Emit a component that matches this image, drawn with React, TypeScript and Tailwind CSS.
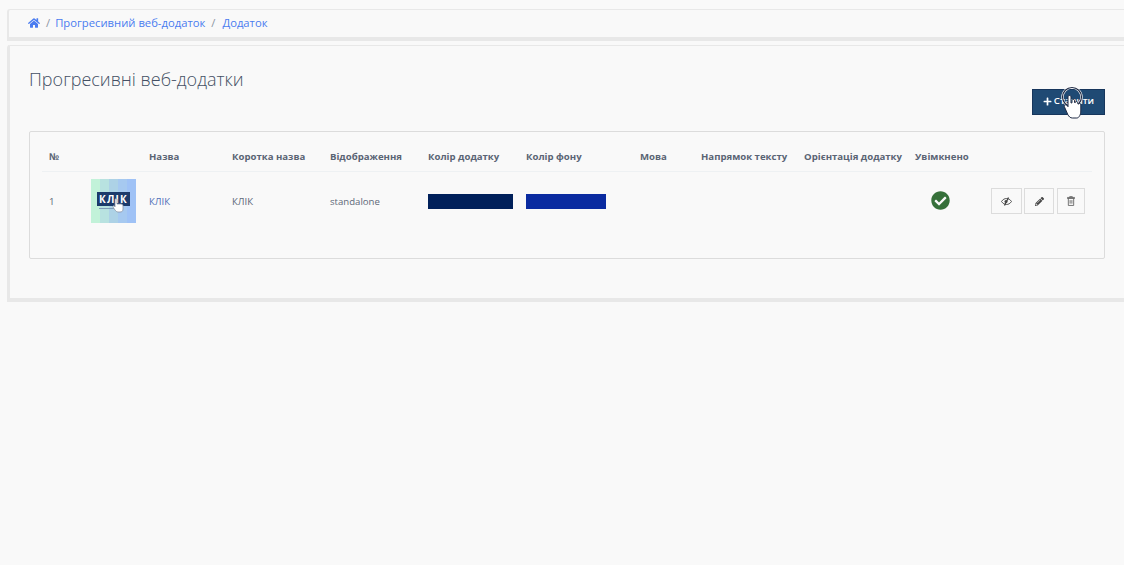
import { FaHome, FaPlus, FaCheckCircle, FaPencilAlt } from "react-icons/fa";

const heads = ["№", "", "Назва", "Коротка назва", "Відображення", "Колір додатку", "Колір фону", "Мова", "Напрямок тексту", "Орієнтація додатку", "Увімкнено", ""];
const cols = "grid grid-cols-[49px_58px_83px_98px_98px_98px_114px_61px_103px_111px_76px_1fr]";
const stripes = ["bg-[#c2f2d9]", "bg-[#b8e2e0]", "bg-[#add2e6]", "bg-[#a6c9f0]", "bg-[#9fc2f6]"];

function Logo() {
  return (
    <div className="relative flex h-[44px] w-[45px]">
      {stripes.map((s) => (
        <div key={s} className={`h-full flex-1 ${s}`} />
      ))}
      <div className="absolute left-[6px] top-[13px] flex h-[14px] w-[33px] items-center justify-center bg-[#1c3a6b] text-[10px] font-bold leading-none tracking-[1.2px] text-white">
        КЛІК
      </div>
      <div className="absolute left-[8px] top-[29px] h-[1px] w-[15px] bg-[#7f9bb8]" />
      <svg className="absolute left-[21px] top-[19px]" width="12" height="15" viewBox="0 0 12 15">
        <path d="M3 1.500c0-1 2-1 2 0V6h4c1.500 0 2 1 2 2v3c0 2-1 3-3 3H6c-1.500 0-2-1-3-2L1 9c-.5-1 .8-1.500 1.500-.8L3 9z" fill="#fff" stroke="#8a93a5" strokeWidth="0.8" />
      </svg>
    </div>
  );
}

function Cursor() {
  return (
    <svg className="pointer-events-none absolute left-[1061px] top-[85px]" width="24" height="35" viewBox="0 0 24 35">
      <circle cx="11" cy="12" r="9.500" fill="none" stroke="#fff" strokeWidth="2.400" />
      <circle cx="11" cy="12" r="9.500" fill="none" stroke="#1f2a44" strokeWidth="1.200" />
      <path d="M7 12c0-2 3-2 3 0v6l1-.2V15.500c0-1.500 2.500-1.500 2.500 0v2l.8.100c.2-1.500 2.500-1.300 2.500.2v1l.7.200c.5-1 2.300-.7 2.300.8v6.200c0 3-1.500 7-4 7h-4.500c-2 0-3.500-1.500-4.500-3.500L3.500 22c-.8-1.800 1-3 2.500-1.500l1 1.200z" fill="#fff" stroke="#1f2a44" strokeWidth="1" />
    </svg>
  );
}

function ActionBtn({ w, children }: { w: string; children: React.ReactNode }) {
  return <div className={`flex h-[26px] items-center justify-center border border-[#dcdcdc] text-[#444] ${w}`}>{children}</div>;
}

export default function App() {
  return (
    <div className="relative min-h-[565px] bg-[#f9f9f9] pl-[7px] pt-[9px] font-['Open_Sans',sans-serif] text-[#5d6878]">
      <nav className="flex h-[32px] items-center gap-[6px] rounded-tl-[3px] border-b-[4px] border-l-[2px] border-t border-[#e8e8e8] pb-[1px] pl-[19px] text-[11.25px] text-[#4a7cf0]">
        <FaHome className="text-[12px]" />
        <span className="text-[#8c95a3]">/</span>
        <span className="-ml-[1px]">Прогресивний веб-додаток</span>
        <span className="text-[#8c95a3]">/</span>
        <span className="ml-[1px]">Додаток</span>
      </nav>
      <section className="mt-[4px] h-[257px] rounded-tl-[3px] border-b-[4px] border-l-[3px] border-t border-[#e8e8e8] pl-[19px] pr-[19px] pt-[21px]">
        <div className="flex items-start justify-between">
          <h1 className="text-[18px] font-light leading-[25px] text-[#445064]">Прогресивні веб-додатки</h1>
          <button className="mt-[22px] flex h-[26px] w-[73px] items-center justify-center gap-[2px] border border-[#17365c] bg-[#1f4a74] pb-[1px] text-[9.6px] font-semibold text-white">
            <FaPlus className="text-[9px]" />
            <span>Ставити</span>
          </button>
        </div>
        <div className="mt-[16px] h-[128px] rounded-[2px] border border-[#dcdcdc] px-[12px] pt-[11px]">
          <div className={`${cols} h-[29px] items-center border-b border-[#eef1f3] text-[9.6px] font-bold text-[#5a6474]`}>
            {heads.map((h, i) => (
              <div key={i} className={i === 0 ? "pl-[7px]" : ""}>{h}</div>
            ))}
          </div>
          <div className={`${cols} -mt-[1px] h-[60px] items-center text-[9.6px]`}>
            <div className="pl-[7px] pt-[2px]">1</div>
            <Logo />
            <div className="pt-[2px] text-[#4f6fb8]">КЛІК</div>
            <div className="pt-[2px]">КЛІК</div>
            <div className="pt-[2px]">standalone</div>
            <div className="h-[15px] w-[85px] bg-[#00205a]" />
            <div className="h-[15px] w-[80px] bg-[#0a2ba0]" />
            <div />
            <div />
            <div />
            <div className="-mt-[2px] pl-[16px]">
              <FaCheckCircle className="text-[19px] text-[#36703a]" />
            </div>
            <div className="flex gap-[2px]">
              <ActionBtn w="w-[31px]">
                <svg width="11" height="9" viewBox="0 0 11 9" fill="none" stroke="#444" strokeWidth="0.9">
                  <path d="M.5 4.500C2 2.300 3.700 1.500 5.500 1.500s3.500.8 5 3c-1.500 2.200-3.200 3-5 3s-3.500-.8-5-3z" />
                  <path d="M3.500 8.500 7.500.5" strokeWidth="1.200" />
                  <circle cx="5" cy="4.500" r="1.500" fill="#444" stroke="none" />
                </svg>
              </ActionBtn>
              <ActionBtn w="w-[30px]"><FaPencilAlt className="text-[9px]" /></ActionBtn>
              <ActionBtn w="w-[28px] ml-[1px]">
                <svg width="8" height="10" viewBox="0 0 9 11" fill="none" stroke="#555" strokeWidth="0.9">
                  <path d="M3 1.500V.6h3v.9M.5 1.500h8v1.200h-8zM1.500 2.700v7.800h6V2.700M3.500 4.500v4M5.500 4.500v4" />
                </svg>
              </ActionBtn>
            </div>
          </div>
        </div>
      </section>
      <Cursor />
    </div>
  );
}
